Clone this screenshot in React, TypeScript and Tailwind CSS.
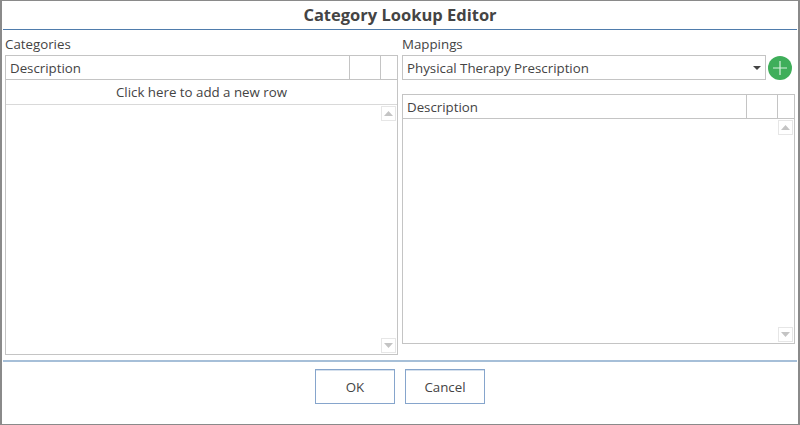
import React from "react";

function ScrollBtn({ dir }: { dir: "up" | "down" }) {
  return (
    <div className="w-[15px] h-[15px] border border-[#e6e6e6] flex items-center justify-center">
      <svg width="9" height="5" viewBox="0 0 9 5">
        <path d={dir === "up" ? "M4.5 0 L9 5 L0 5 Z" : "M0 0 L9 0 L4.5 5 Z"} fill="#c4c4c4" />
      </svg>
    </div>
  );
}

function Header() {
  return (
    <div className="flex h-6 border-b border-[#c4c4c4] shrink-0">
      <div className="flex-1 pl-1 leading-[24px]">Description</div>
      <div className="w-[31px] border-l border-[#c4c4c4]" />
      <div className="w-[17px] border-l border-[#c4c4c4]" />
    </div>
  );
}

function ScrollArea() {
  return (
    <div className="flex-1 flex flex-col items-end justify-between pt-[1px] pb-[1px] pr-[1px]">
      <ScrollBtn dir="up" />
      <ScrollBtn dir="down" />
    </div>
  );
}

export default function App() {
  return (
    <div
      className="w-[800px] h-[425px] bg-white border-l-2 border-r-2 border-t border-b border-[#8a8a8a] flex flex-col text-[13.3px] text-[#444444] overflow-hidden"
      style={{ fontFamily: '"Open Sans", sans-serif' }}
    >
      <div className="h-[28px] shrink-0 flex items-center justify-center mx-[1px] text-[16.5px] font-bold leading-none text-[#444444]">
        Category Lookup Editor
      </div>
      <div className="h-[1px] bg-[#4f7cac] mx-[1px] shrink-0" />
      <div className="flex flex-1 min-h-0 pl-[3px] pr-[4px]">
        <div className="w-[393px] flex flex-col shrink-0">
          <div className="h-[25px] leading-[28px] shrink-0">Categories</div>
          <div className="h-[300px] border border-[#c4c4c4] flex flex-col">
            <Header />
            <div className="h-[25px] shrink-0 border-b border-[#d9d9d9] text-center leading-[24px]">
              Click here to add a new row
            </div>
            <ScrollArea />
          </div>
        </div>
        <div className="ml-1 flex-1 flex flex-col min-w-0">
          <div className="h-[25px] leading-[28px] shrink-0">Mappings</div>
          <div className="flex items-center h-[25px] shrink-0">
            <div className="w-[364px] h-[25px] border border-[#c4c4c4] flex items-center justify-between pl-1 pr-[4px]">
              <span className="leading-[24px]">Physical Therapy Prescription</span>
              <svg width="8" height="4" viewBox="0 0 8 4">
                <path d="M0 0 L8 0 L4 4 Z" fill="#444444" />
              </svg>
            </div>
            <svg className="ml-[2px]" width="24" height="24" viewBox="0 0 24 24">
              <circle cx="12" cy="12" r="12" fill="#3fae5a" />
              <path d="M12 5 V19 M5 12 H19" stroke="#d8f0de" strokeWidth="1.2" />
            </svg>
          </div>
          <div className="mt-[14px] h-[250px] w-[393px] border border-[#c4c4c4] flex flex-col">
            <Header />
            <ScrollArea />
          </div>
        </div>
      </div>
      <div className="h-[2px] bg-[#a6bfd8] mx-[1px] shrink-0" />
      <div className="h-[62px] shrink-0 flex justify-center gap-[10px] pt-[7px]">
        <button className="w-[80px] h-[35px] border border-[#86a5cc] shadow-[inset_0_1px_0_#d5e0ed] text-center pt-[2px]">OK</button>
        <button className="w-[80px] h-[35px] border border-[#86a5cc] shadow-[inset_0_1px_0_#d5e0ed] text-center pt-[2px]">Cancel</button>
      </div>
    </div>
  );
}
